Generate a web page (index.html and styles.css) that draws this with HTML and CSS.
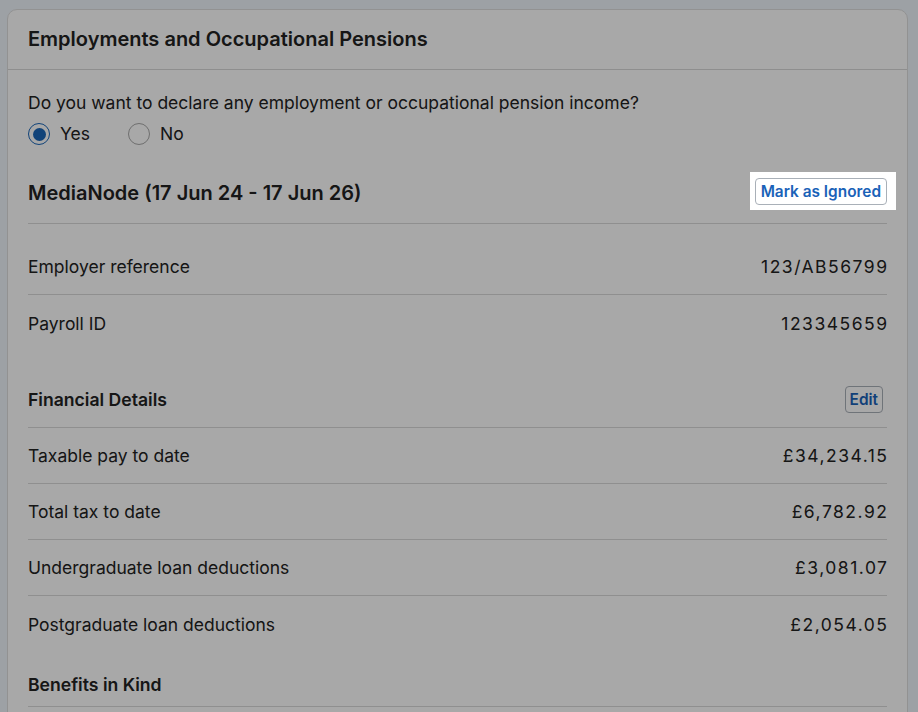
FILE: index.html
```html
<!DOCTYPE html>
<html lang="en">
<head>
<meta charset="utf-8">
<title>Employments and Occupational Pensions</title>
<link rel="stylesheet" href="styles.css">
</head>
<body>
<div class="page">
  <section class="card">
    <header class="card-head">
      <h2 class="card-title">Employments and Occupational Pensions</h2>
    </header>
    <div class="card-body">
      <p class="question">Do you want to declare any employment or occupational pension income?</p>
      <div class="radios">
        <label class="radio"><span class="radio-circle is-checked"></span>Yes</label>
        <label class="radio"><span class="radio-circle"></span>No</label>
      </div>

      <div class="emp-head">
        <h3 class="emp-title">MediaNode (17 Jun 24 - 17 Jun 26)</h3>
        <div class="spotlight">
          <button class="btn">Mark as Ignored</button>
        </div>
      </div>

      <div class="rows rows-first">
        <div class="row"><span>Employer reference</span><span class="value">123/AB56799</span></div>
        <div class="row"><span>Payroll ID</span><span class="value">123345659</span></div>
      </div>

      <div class="section-head section-financial">
        <h4 class="section-title">Financial Details</h4>
        <button class="btn btn-edit">Edit</button>
      </div>
      <div class="rows">
        <div class="row"><span>Taxable pay to date</span><span class="value">£34,234.15</span></div>
        <div class="row"><span>Total tax to date</span><span class="value">£6,782.92</span></div>
        <div class="row"><span>Undergraduate loan deductions</span><span class="value">£3,081.07</span></div>
        <div class="row"><span>Postgraduate loan deductions</span><span class="value">£2,054.05</span></div>
      </div>

      <div class="section-head section-benefits">
        <h4 class="section-title">Benefits in Kind</h4>
      </div>
    </div>
  </section>
</div>
<div class="overlay"></div>
</body>
</html>
```

FILE: styles.css
```css
* { box-sizing: border-box; }

html, body {
  margin: 0;
  padding: 0;
  height: 100%;
  overflow: hidden;
}

body {
  background: #eef4fb;
  font-family: "Inter", "Noto Sans", sans-serif;
  color: #222222;
}

.page {
  padding: 9px 10px 0 7px;
}

.card {
  background: #ffffff;
  border: 1px solid #dedede;
  border-radius: 10px;
  padding-bottom: 40px;
}

.card-head {
  height: 60px;
  display: flex;
  align-items: center;
  padding: 0 20px 2px;
  border-bottom: 1px solid #d8d8d8;
}

.card-title {
  margin: 0;
  font-size: 20px;
  font-weight: 600;
  line-height: 24px;
}

.card-body {
  padding: 21px 20px 0 20px;
}

.question {
  margin: 0;
  font-size: 17.5px;
  line-height: 24px;
}

.radios {
  display: flex;
  gap: 38px;
  margin-top: 7px;
  height: 24px;
  align-items: center;
}

.radio {
  display: flex;
  align-items: center;
  gap: 10px;
  font-size: 17.5px;
  line-height: 24px;
}

.radio-circle {
  width: 22px;
  height: 22px;
  border-radius: 50%;
  border: 1.5px solid #a8a8a8;
  background: #ffffff;
  display: flex;
  align-items: center;
  justify-content: center;
}

.radio-circle.is-checked {
  border-color: #1a66b8;
}

.radio-circle.is-checked::after {
  content: "";
  width: 13px;
  height: 13px;
  border-radius: 50%;
  background: #1a66b8;
}

.emp-head {
  display: flex;
  align-items: center;
  justify-content: space-between;
  margin-top: 14px;
  padding: 12px 0 13px;
  border-bottom: 1px solid #dadada;
}

.emp-title {
  margin: 0;
  padding-top: 3px;
  font-size: 20px;
  font-weight: 600;
  line-height: 24px;
}

.spotlight {
  position: relative;
  z-index: 20;
  background: #ffffff;
  padding: 6px 9px 5px 5px;
  margin-right: -9px;
}

.btn {
  font-family: inherit;
  font-size: 15.4px;
  font-weight: 600;
  line-height: 19px;
  color: #1a62b8;
  background: #ffffff;
  border: 1px solid #a9b0b8;
  border-radius: 4px;
  padding: 3px 5px;
  cursor: pointer;
}

.btn-edit {
  margin: 4px 4px 4px 0;
  padding: 3px 4px;
}

.rows-first {
  margin-top: 15px;
}

.row {
  height: 56px;
  display: flex;
  align-items: center;
  justify-content: space-between;
  font-size: 17.5px;
  border-bottom: 1px solid #dadada;
}

.value {
  letter-spacing: 1.5px;
  margin-right: -1.5px;
}

.rows .row:last-child {
  border-bottom: none;
}

.section-head {
  display: flex;
  align-items: center;
  justify-content: space-between;
  padding: 10px 0;
  border-bottom: 1px solid #dadada;
}

.section-financial {
  margin-top: 21px;
}

.section-benefits {
  margin-top: 12px;
}

.section-title {
  margin: 0;
  font-size: 17.6px;
  font-weight: 600;
  line-height: 22px;
}

.overlay {
  position: fixed;
  inset: 0;
  z-index: 10;
  background: rgba(0, 0, 0, 0.34);
}
```
